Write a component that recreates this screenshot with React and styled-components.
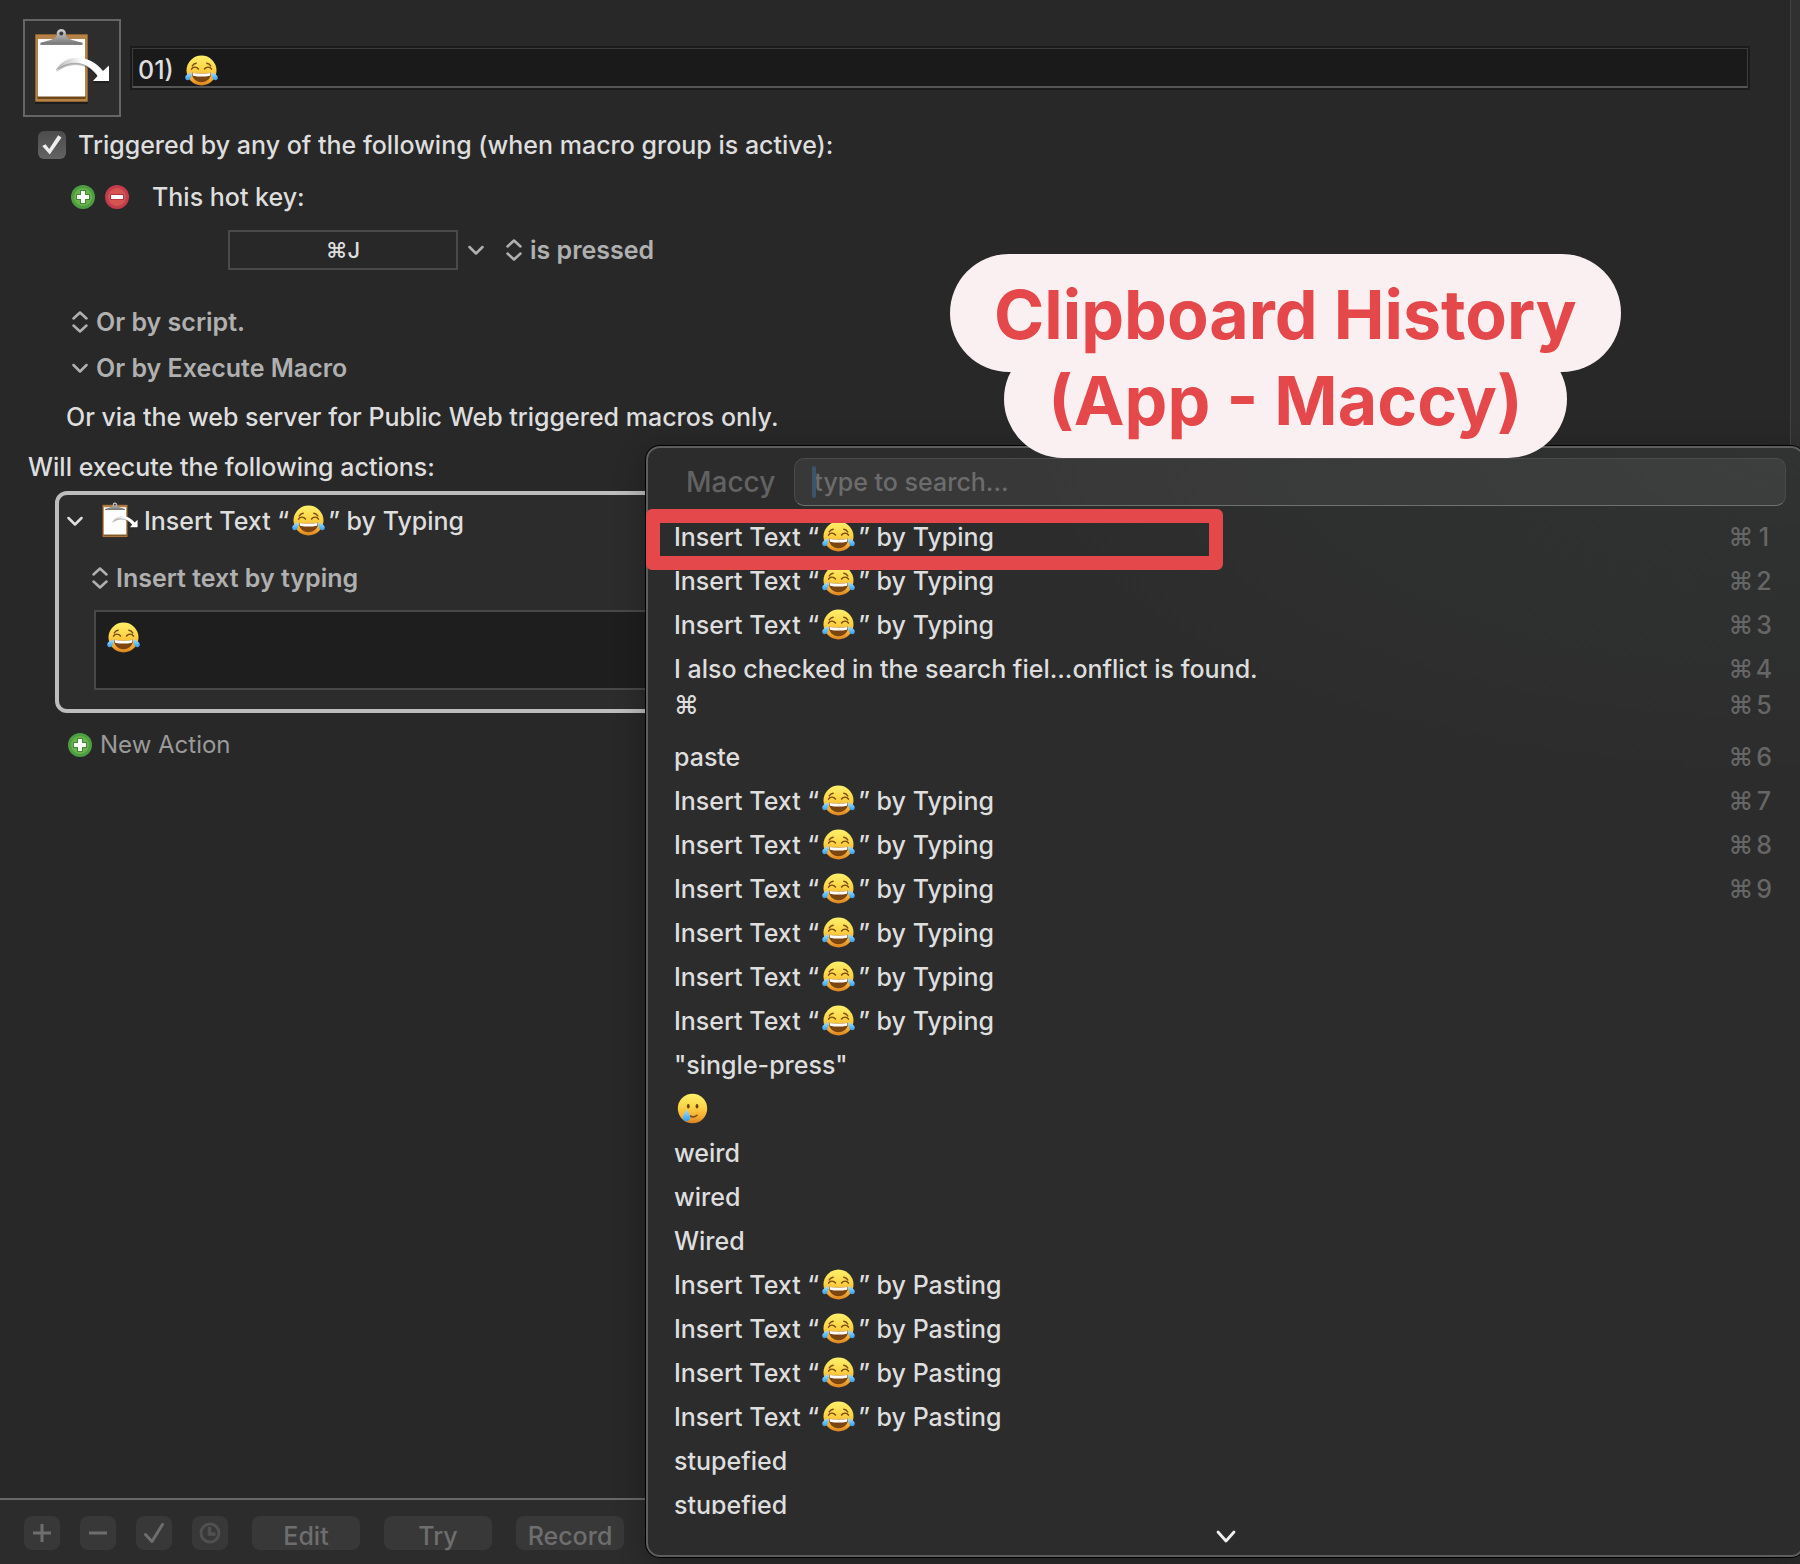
import { useState } from 'react';
import styled, { createGlobalStyle } from 'styled-components';

const CLIPS = [
  ['Insert Text “😂” by Typing', '1'],
  ['Insert Text “😂” by Typing', '2'],
  ['Insert Text “😂” by Typing', '3'],
  ['I also checked in the search fiel...onflict is found.', '4'],
  ['⌘', '5'],
  ['paste', '6'],
  ['Insert Text “😂” by Typing', '7'],
  ['Insert Text “😂” by Typing', '8'],
  ['Insert Text “😂” by Typing', '9'],
  ['Insert Text “😂” by Typing'],
  ['Insert Text “😂” by Typing'],
  ['Insert Text “😂” by Typing'],
  ['"single-press"'],
  ['🥲'],
  ['weird'],
  ['wired'],
  ['Wired'],
  ['Insert Text “😂” by Pasting'],
  ['Insert Text “😂” by Pasting'],
  ['Insert Text “😂” by Pasting'],
  ['Insert Text “😂” by Pasting'],
  ['stupefied'],
  ['stupefied'],
];

/* shared gradients for the emoji drawings */
const EmojiDefs = () => (
  <HiddenSvg aria-hidden='true'>
    <defs>
      <linearGradient id='face' x1='0' y1='0' x2='0' y2='1'>
        <stop offset='0' stopColor='#fff06a' />
        <stop offset='0.45' stopColor='#fdd446' />
        <stop offset='0.8' stopColor='#f3a92f' />
        <stop offset='1' stopColor='#d8811f' />
      </linearGradient>
      <linearGradient id='tear' x1='0' y1='0' x2='0' y2='1'>
        <stop offset='0' stopColor='#a8e4ff' />
        <stop offset='1' stopColor='#2f9cf0' />
      </linearGradient>
      <linearGradient id='clip' x1='0' y1='0' x2='0' y2='1'>
        <stop offset='0' stopColor='#d5d5d5' />
        <stop offset='1' stopColor='#757575' />
      </linearGradient>
      <linearGradient id='swoosh' x1='0' y1='0' x2='1' y2='0'>
        <stop offset='0' stopColor='#b5b5b5' />
        <stop offset='0.5' stopColor='#ffffff' />
      </linearGradient>
    </defs>
  </HiddenSvg>
);

const JoyEmoji = () => (
  <EmojiSvg viewBox='0 0 33 31' role='img' aria-label='😂'>
    <circle cx='16.5' cy='15.5' r='15' fill='url(#face)' />
    <path
      d='M6.5 14.200c1.600-2.700 5-2.700 7-.2M19.500 14c2-2.500 5.400-2.500 7 .2M7.200 11c.8-1.500 2.200-2.500 4-2.800M21.800 8.200c1.800.3 3.200 1.300 4 2.800'
      fill='none'
      stroke='#7a4a12'
      strokeWidth='1.400'
      strokeLinecap='round'
    />
    <path d='M7 17.800c6 1.200 13 1.200 19 0 .3 5.400-3.900 9.400-9.500 9.400S6.700 23.200 7 17.800z' fill='#7b4512' />
    <path d='M7.600 17.900c6 1.100 12 1.100 17.800 0 .1 1.200 0 2-.5 2.800-5.300 1.200-11.500 1.200-16.800 0-.4-.8-.6-1.600-.5-2.800z' fill='#fff' />
    <path d='M6.300 17c.4 4-.7 8.300-3.500 8.300C.9 25.300 0 23.900.3 22c.4-2.300 3.400-3.200 6-5z' fill='url(#tear)' />
    <path d='M26.700 17c-.4 4 .7 8.300 3.500 8.300 1.900 0 2.800-1.400 2.500-3.300-.4-2.300-3.400-3.200-6-5z' fill='url(#tear)' />
  </EmojiSvg>
);

const TearEmoji = () => (
  <EmojiSvg viewBox='0 0 33 31' role='img' aria-label='🥲'>
    <circle cx='15.500' cy='15.500' r='14.700' fill='url(#face)' />
    <ellipse cx='11.300' cy='13.200' rx='1.400' ry='2.300' fill='#6b4010' />
    <ellipse cx='20' cy='13.200' rx='1.400' ry='2.300' fill='#6b4010' />
    <path d='M13 23c2.500 1.400 5 1.100 7-.8' fill='none' stroke='#7a4a12' strokeWidth='1.500' strokeLinecap='round' />
    <path d='M9.800 16c1 3 3.400 5.800 3.400 8.600 0 2.300-1.700 3.600-3.700 3.600S5.800 26.900 5.800 24.600c0-2.700 3-5.500 4-8.600z' fill='url(#tear)' />
  </EmojiSvg>
);

const ClipboardIcon = ({ size }) => (
  <svg width={size} height={size} viewBox='0 0 80 80' aria-hidden='true'>
    <rect x='3' y='8' width='53' height='68' rx='1' fill='#000' opacity='0.350' />
    <rect x='3' y='6' width='53' height='68' rx='1' fill='#8f6330' />
    <rect x='4' y='7' width='51' height='66' fill='#b5824a' />
    <rect x='5.500' y='68' width='48' height='3' fill='#6d4718' />
    <path d='M6 11h47v57.500H6z' fill='#fff' />
    <path d='M8.500 16.700c0-4.200 13-3.200 16.500-9.200a4.700 4.700 0 1 1 8.600 0c3.500 6 16.900 5 16.900 9.200z' fill='url(#clip)' />
    <path d='M8.500 14.500h42v2.200h-42z' fill='#7d7d7d' />
    <circle cx='29.300' cy='5.500' r='2' fill='#3a3a3a' />
    <path d='M24 44C32 32 54 26 71 45l6-5.500V55H61l4.500-5C55 35 40 33 24 44z' fill='#000' opacity='0.250' />
    <path d='M24 42C32 27 56 24 71 43l6-5.500V53H61l4.500-5C55 34 40 31 24 42z' fill='url(#swoosh)' />
    <path d='M24 42c16-11 31-8 41 5' fill='none' stroke='#777' strokeWidth='0.800' opacity='0.600' />
  </svg>
);

const PlusIcon = () => (
  <svg width='24' height='24' viewBox='0 0 24 24' aria-hidden='true'>
    <circle cx='12' cy='12' r='12' fill='#4d9e42' />
    <circle cx='12' cy='12' r='9' fill='#6cb14a' />
    <path d='M12 5v14M5 12h14' stroke='#3f8a35' strokeWidth='6' />
    <path d='M12 6v12M6 12h12' stroke='#fff' strokeWidth='4' />
  </svg>
);

const MinusIcon = () => (
  <svg width='24' height='24' viewBox='0 0 24 24' aria-hidden='true'>
    <circle cx='12' cy='12' r='12' fill='#c43c4c' />
    <circle cx='12' cy='12' r='9' fill='#d25552' />
    <path d='M5 12h14' stroke='#b93343' strokeWidth='6' />
    <path d='M6 12h12' stroke='#fff' strokeWidth='4' />
  </svg>
);

const ChevronIcon = () => (
  <svg width='16' height='22' viewBox='0 0 16 22' aria-hidden='true'>
    <path d='M1.500 8l6.500 6.500L14.500 8' fill='none' stroke='currentColor' strokeWidth='2.500' strokeLinecap='round' strokeLinejoin='round' />
  </svg>
);

const UpDownIcon = () => (
  <svg width='16' height='22' viewBox='0 0 16 22' aria-hidden='true'>
    <path d='M1.500 7.500L8 1.500l6.500 6M1.500 14.500l6.500 6 6.500-6' fill='none' stroke='currentColor' strokeWidth='2.500' strokeLinecap='round' strokeLinejoin='round' />
  </svg>
);

const withEmoji = (text) =>
  text
    .split(/(😂|🥲)/u)
    .map((part, i) => {
      if (part === '😂') return <JoyEmoji key={i} />;
      if (part === '🥲') return <TearEmoji key={i} />;
      return part;
    });

const PopUp = ({ label, value, single }) => (
  <PopUpLabel>
    {single ? <ChevronIcon /> : <UpDownIcon />}
    <PopUpSelect aria-label={label} defaultValue={value}>
      <option>{value}</option>
    </PopUpSelect>
  </PopUpLabel>
);

const MacroEditor = () => {
  const [enabled, setEnabled] = useState(true);

  return (
    <Editor>
      <Pane>
        <TitleRow>
          <IconWell aria-label='Macro icon'>
            <ClipboardIcon size={80} />
          </IconWell>
          <TitleField>
            <TitleInput aria-label='Macro name' defaultValue='01)' />
            <JoyEmoji />
          </TitleField>
        </TitleRow>

        <TriggerToggle>
          <CheckBox
            type='checkbox'
            checked={enabled}
            onChange={(e) => setEnabled(e.target.checked)}
          />
          Triggered by any of the following (when macro group is active):
        </TriggerToggle>

        <HotKeyRow>
          <PlainBtn aria-label='Add trigger'>
            <PlusIcon />
          </PlainBtn>
          <PlainBtn aria-label='Remove trigger'>
            <MinusIcon />
          </PlainBtn>
          <HotKeyLabel htmlFor='hotkey'>This hot key:</HotKeyLabel>
        </HotKeyRow>

        <KeyRow>
          <KeyInput id='hotkey' defaultValue='⌘J' />
          <PlainBtn aria-label='Hot key options'>
            <ChevronIcon />
          </PlainBtn>
          <PopUp label='Hot key event' value='is pressed' />
        </KeyRow>

        <OtherTriggers>
          <PopUp label='Script trigger' value='Or by script.' />
          <PopUp label='Execute macro trigger' value='Or by Execute Macro' single />
        </OtherTriggers>
        <WebNote>Or via the web server for Public Web triggered macros only.</WebNote>
        <ActionsHeading>Will execute the following actions:</ActionsHeading>

        <ActionCard>
          <ActionHead>
            <PlainBtn $light aria-label='Collapse action'>
              <ChevronIcon />
            </PlainBtn>
            <ActionTitle>
              <ClipboardIcon size={38} />
              <span>{withEmoji('Insert Text “😂” by Typing')}</span>
            </ActionTitle>
          </ActionHead>
          <ActionBody>
            <PopUp label='Insert mode' value='Insert text by typing' />
            <TextWrapper>
              <ActionText aria-label='Text to insert' />
              <TextContent>
                <JoyEmoji />
              </TextContent>
            </TextWrapper>
          </ActionBody>
        </ActionCard>

        <NewActionBtn>
          <PlusIcon />
          New Action
        </NewActionBtn>
      </Pane>
      <Gutter />
    </Editor>
  );
};

const Toolbar = () => (
  <Bar>
    <ToolBtn aria-label='Add'>
      <svg width='20' height='20' viewBox='0 0 20 20'>
        <path d='M10 1v18M1 10h18' stroke='currentColor' strokeWidth='3' />
      </svg>
    </ToolBtn>
    <ToolBtn aria-label='Remove'>
      <svg width='20' height='20' viewBox='0 0 20 20'>
        <path d='M1 10h18' stroke='currentColor' strokeWidth='3' />
      </svg>
    </ToolBtn>
    <ToolBtn aria-label='Enable'>
      <svg width='20' height='20' viewBox='0 0 20 20'>
        <path d='M1.500 11.500L8 18.500 18.500 1.500' fill='none' stroke='currentColor' strokeWidth='3' strokeLinecap='round' strokeLinejoin='round' />
      </svg>
    </ToolBtn>
    <ToolBtn $dim aria-label='Recent'>
      <svg width='22' height='22' viewBox='0 0 22 22'>
        <circle cx='11' cy='11' r='9' fill='none' stroke='currentColor' strokeWidth='3' />
        <path d='M10.500 5v7h6' fill='none' stroke='currentColor' strokeWidth='3.500' />
      </svg>
    </ToolBtn>
    <WideBtns>
      <WideBtn>Edit</WideBtn>
      <WideBtn>Try</WideBtn>
      <WideBtn>Record</WideBtn>
    </WideBtns>
  </Bar>
);

const ClipboardHistory = () => {
  const [query, setQuery] = useState('');

  return (
    <History>
      <HistoryHead>
        <AppName htmlFor='search'>Maccy</AppName>
        <SearchWrapper>
          <SearchInput
            id='search'
            placeholder='type to search...'
            value={query}
            onChange={(e) => setQuery(e.target.value)}
          />
          <Caret />
        </SearchWrapper>
      </HistoryHead>
      <ClipList>
        {CLIPS.map(([text, key], i) => (
          <li key={i}>
            <ClipBtn $raised={text === '⌘'}>
              <span>{withEmoji(text)}</span>
              {key && (
                <Shortcut>
                  <span>⌘</span>
                  <span>{key}</span>
                </Shortcut>
              )}
            </ClipBtn>
          </li>
        ))}
      </ClipList>
      <MoreBtn aria-label='More items'>
        <svg width='20' height='14' viewBox='0 0 20 14' aria-hidden='true'>
          <path d='M2 2l8 9 8-9' fill='none' stroke='currentColor' strokeWidth='2.800' strokeLinecap='round' strokeLinejoin='round' />
        </svg>
      </MoreBtn>
      <Highlight />
    </History>
  );
};

const App = () => {
  return (
    <Window>
      <GlobalStyle />
      <EmojiDefs />
      <MacroEditor />
      <Toolbar />
      <ClipboardHistory />
      <Callout>
        <CalloutLine $front>Clipboard History</CalloutLine>
        <CalloutLine>(App - Maccy)</CalloutLine>
      </Callout>
    </Window>
  );
};

const GlobalStyle = createGlobalStyle`
  * {
    box-sizing: border-box;
  }

  body {
    margin: 0;
    background-color: #282828;
    color: #dedede;
    font-family: Inter, 'Liberation Sans', sans-serif;
    font-size: 25px;
    font-weight: 500;
    line-height: 32px;
  }

  button,
  input,
  select,
  textarea {
    margin: 0;
    padding: 0;
    border: 0;
    outline: 0;
    background: none;
    color: inherit;
    font: inherit;
  }

  svg {
    flex: none;
  }
`;

const Window = styled.div`
  position: relative;
  display: flex;
  flex-direction: column;
  min-height: 100vh;
  overflow: hidden;
`;

const HiddenSvg = styled.svg`
  position: absolute;
  width: 0;
  height: 0;
`;

const EmojiSvg = styled.svg`
  width: 33px;
  height: 31px;
  margin: 0 3px;
  vertical-align: -6px;
`;

const Editor = styled.main`
  display: flex;
  flex: 1;
`;

const Pane = styled.section`
  flex: 1;
  padding: 19px 40px 24px 23px;
`;

const Gutter = styled.div`
  width: 10px;
  background-color: #303030;
  border-left: 1px solid #444;
`;

const TitleRow = styled.div`
  display: flex;
  align-items: center;
  gap: 9px;
`;

const IconWell = styled.button`
  display: flex;
  justify-content: center;
  align-items: center;
  width: 98px;
  height: 98px;
  background-color: #2d2d2d;
  border: 2px solid #656565;
`;

const TitleField = styled.div`
  display: flex;
  flex: 1;
  align-items: center;
  height: 40px;
  margin: 0 2px;
  padding: 5px 0 0 5px;
  background-color: #1a1a1a;
  border: 1px solid #3c3c3c;
  border-bottom: 2px solid #555;
  outline: 2px solid #1b1b1b;
`;

const TitleInput = styled.input`
  width: 44px;
`;

const TriggerToggle = styled.label`
  display: flex;
  align-items: center;
  gap: 12px;
  margin: 12px 0 0 15px;
`;

const CheckBox = styled.input`
  appearance: none;
  width: 28px;
  height: 28px;
  background: linear-gradient(#4c4c4c, #636363);
  border-radius: 6px;

  &:checked::before {
    content: '';
    display: block;
    width: 28px;
    height: 28px;
    background-color: #eee;
    clip-path: polygon(15% 54%, 27% 47%, 40% 64%, 72% 15%, 84% 23%, 42% 84%);
  }
`;

const HotKeyRow = styled.div`
  display: flex;
  align-items: center;
  gap: 10px;
  margin: 20px 0 0 48px;
`;

const PlainBtn = styled.button`
  display: flex;
  color: ${(props) => (props.$light ? '#dedede' : '#b0b0b0')};
`;

const HotKeyLabel = styled.label`
  margin-left: 13px;
`;

const KeyRow = styled.div`
  display: flex;
  align-items: center;
  gap: 10px;
  margin: 17px 0 0 205px;

  label {
    margin-left: 12px;
  }
`;

const KeyInput = styled.input`
  width: 230px;
  height: 40px;
  border: 2px solid #4a4a4a;
  text-align: center;
  font-size: 22px;
`;

const PopUpLabel = styled.label`
  display: flex;
  align-items: center;
  gap: 8px;
  color: #b0b0b0;
`;

const PopUpSelect = styled.select`
  appearance: none;
  font-weight: 600;
`;

const OtherTriggers = styled.div`
  display: flex;
  flex-direction: column;
  gap: 14px;
  margin: 36px 0 0 49px;
`;

const WebNote = styled.p`
  margin: 17px 0 0 43px;
`;

const ActionsHeading = styled.h2`
  margin: 18px 0 0 5px;
  font-size: 25px;
  font-weight: 500;
`;

const ActionCard = styled.article`
  margin: 8px 0 0 32px;
  padding: 7px 30px 19px 8px;
  background-color: #2c2c2c;
  border: 4px solid #bdbdbd;
  border-radius: 12px;
`;

const ActionHead = styled.header`
  display: flex;
  align-items: center;
  gap: 18px;
`;

const ActionTitle = styled.div`
  display: flex;
  align-items: center;
  gap: 5px;
`;

const ActionBody = styled.div`
  padding: 22px 0 0 25px;
`;

const TextWrapper = styled.div`
  position: relative;
  margin: 16px 0 0 2px;
`;

const ActionText = styled.textarea`
  display: block;
  width: 100%;
  height: 80px;
  background-color: #1e1e1e;
  border: 2px solid #484848;
  resize: none;
`;

const TextContent = styled.div`
  position: absolute;
  top: 12px;
  left: 10px;
  pointer-events: none;
`;

const NewActionBtn = styled.button`
  display: flex;
  align-items: center;
  gap: 8px;
  margin: 16px 0 0 45px;
  color: #9a9a9a;
  font-size: 24px;
  font-weight: 400;
`;

const Bar = styled.footer`
  display: flex;
  align-items: flex-start;
  gap: 20px;
  height: 66px;
  padding: 16px 24px;
  background-color: #2c2c2c;
  border-top: 2px solid #686868;
`;

const ToolBtn = styled.button`
  display: flex;
  justify-content: center;
  align-items: center;
  width: 36px;
  height: 34px;
  background-color: #383838;
  border-radius: 8px;
  color: ${(props) => (props.$dim ? '#505050' : '#6e6e6e')};
`;

const WideBtns = styled.div`
  display: flex;
  gap: 24px;
  margin-left: 4px;
`;

const WideBtn = styled(ToolBtn)`
  width: 108px;
  padding-top: 5px;
`;

const History = styled.aside`
  position: absolute;
  top: 446px;
  right: -5px;
  bottom: 7px;
  left: 646px;
  display: flex;
  flex-direction: column;
  background-color: #2c2c2c;
  background-image: radial-gradient(ellipse 800px 340px at 100% 0, #303332, #2c2c2c);
  border: 2px solid #5e5e5e;
  border-radius: 14px;
  box-shadow: 0 0 0 1px #000, 0 6px 30px rgba(0, 0, 0, 0.3);
`;

const HistoryHead = styled.div`
  display: flex;
  align-items: center;
  gap: 19px;
  padding: 10px 17px 9px 38px;
`;

const AppName = styled.label`
  color: #626262;
  font-size: 28px;
`;

const SearchWrapper = styled.div`
  position: relative;
  flex: 1;
`;

const SearchInput = styled.input`
  width: 100%;
  height: 48px;
  padding-left: 19px;
  background-color: rgba(255, 255, 255, 0.06);
  border: 1px solid #4b4b4b;
  border-bottom-color: #707070;
  border-radius: 10px;

  &::placeholder {
    color: #6c6c6c;
    opacity: 1;
  }
`;

const Caret = styled.span`
  position: absolute;
  top: 8px;
  left: 18px;
  width: 4px;
  height: 32px;
  background-color: #3d5468;
  border-radius: 2px;
`;

const ClipList = styled.ul`
  flex: 1 1 0;
  min-height: 0;
  margin: 0;
  padding: 0;
  overflow: hidden;
  list-style: none;
`;

const ClipBtn = styled.button`
  display: flex;
  justify-content: space-between;
  align-items: center;
  width: 100%;
  height: 44px;
  padding: 0 30px 0 26px;
  padding-bottom: ${(props) => (props.$raised ? '16px' : '0')};
`;

const Shortcut = styled.kbd`
  display: grid;
  grid-template-columns: 28px 18px;
  color: #666;
  font-family: inherit;
`;

const MoreBtn = styled.button`
  display: flex;
  justify-content: center;
  align-items: center;
  height: 41px;
  padding-top: 4px;
  color: #f0f0f0;
`;

const Highlight = styled.div`
  position: absolute;
  top: 61px;
  left: -2px;
  width: 577px;
  height: 61px;
  border: 14px solid #e5484a;
  border-radius: 6px;
  pointer-events: none;
`;

const Callout = styled.div`
  position: absolute;
  top: 254px;
  left: 950px;
  display: flex;
  flex-direction: column;
  align-items: center;
`;

const CalloutLine = styled.div`
  position: relative;
  z-index: ${(props) => (props.$front ? 1 : 0)};
  padding: 17px 44px 15px;
  background-color: #faf0f1;
  border-radius: 59px;
  color: #e5484a;
  font-size: 68px;
  font-weight: 700;
  line-height: 86px;

  & + & {
    margin-top: -32px;
  }
`;

export default App;
